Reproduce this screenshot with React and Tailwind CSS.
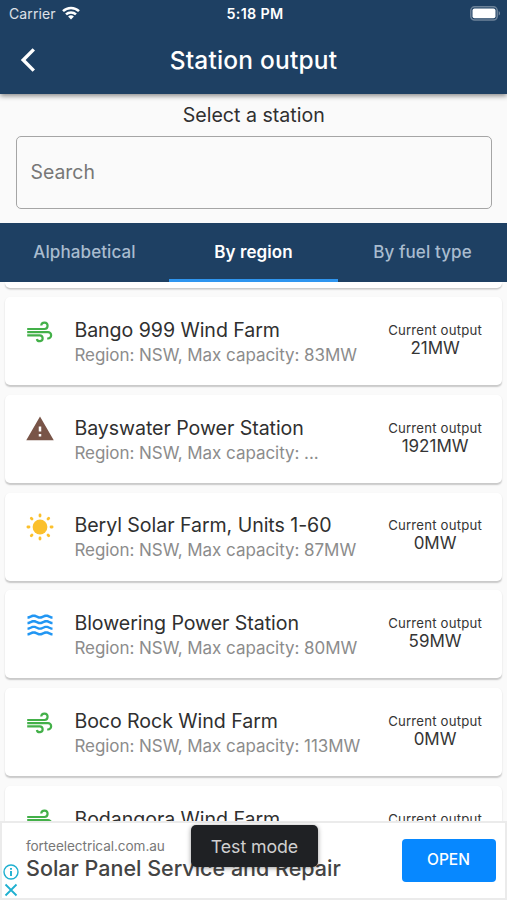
import clsx from 'clsx';
import { MdWarning, MdWaves } from 'react-icons/md';

const stations = [
  { name: 'Bango 999 Wind Farm', detail: 'Region: NSW, Max capacity: 83MW', output: '21MW', fuel: 'wind' },
  { name: 'Bayswater Power Station', detail: 'Region: NSW, Max capacity: ...', output: '1921MW', fuel: 'coal' },
  { name: 'Beryl Solar Farm, Units 1-60', detail: 'Region: NSW, Max capacity: 87MW', output: '0MW', fuel: 'solar' },
  { name: 'Blowering Power Station', detail: 'Region: NSW, Max capacity: 80MW', output: '59MW', fuel: 'hydro' },
  { name: 'Boco Rock Wind Farm', detail: 'Region: NSW, Max capacity: 113MW', output: '0MW', fuel: 'wind' },
  { name: 'Bodangora Wind Farm', detail: 'Region: NSW, Max capacity: 113MW', output: '0MW', fuel: 'wind' },
];

const tabs = ['Alphabetical', 'By region', 'By fuel type'];

const WindIcon = () => (
  <svg viewBox="0 0 28 24" className="h-6 w-7 text-[#43b049]" fill="none" stroke="currentColor" strokeWidth="2.2">
    <path d="M1.2 9h17.3a3.2 3.2 0 1 0-3.3-3.5" />
    <path d="M1.2 12.2h20.8a3.1 3.1 0 0 1 0 6.3h-.8" />
    <path d="M1.2 15.4h12.6a2.9 2.9 0 1 1-2.9 3.5" />
  </svg>
);

const SunIcon = () => (
  <svg viewBox="0 0 28 28" className="size-7 text-[#fbc02d]" fill="currentColor">
    <circle cx="14" cy="14" r="7.4" />
    <g stroke="currentColor" strokeWidth="2.8" strokeLinecap="round">
      <path d="M14 1.9v1.1M14 25v1.1M1.9 14h1.1M25 14h1.1M5.3 5.3l.7.7M22 22l.7.7M5.3 22.7l.7-.7M22 6l.7-.7" />
    </g>
  </svg>
);

const FuelIcon = ({ fuel }) => {
  if (fuel === 'wind') return <WindIcon />;
  if (fuel === 'coal') return <MdWarning className="size-[30px] shrink-0 text-[#795548]" />;
  if (fuel === 'solar') return <SunIcon />;
  return <MdWaves className="size-[30px] shrink-0 text-[#2196f3]" />;
};

const StatusBar = () => (
  <div className="grid h-[27px] grid-cols-3 items-center pr-[6px] pl-[9px] text-[14px]">
    <div className="flex items-center gap-[6px]">
      <span className="tracking-[0.1px] text-white/85">Carrier</span>
      <svg viewBox="0 0 18 14" className="mb-[2px] h-[14px] w-[18px]" fill="none" stroke="white" strokeWidth="2.5">
        <path d="M1 5.2a11.5 11.5 0 0 1 16 0" />
        <path d="M4 8.4a7.2 7.2 0 0 1 10 0" />
        <path d="M9 13.6l-2.9-3a4.2 4.2 0 0 1 5.8 0z" fill="white" stroke="none" />
      </svg>
    </div>
    <span className="text-center text-[14.3px] font-semibold tracking-[0.35px]">5:18 PM</span>
    <svg viewBox="0 0 31 15" className="mb-px h-[15px] w-[31px] justify-self-end">
      <rect x=".8" y=".8" width="26.4" height="13.2" rx="3.8" fill="none" stroke="white" strokeOpacity=".35" strokeWidth="1.5" />
      <rect x="2.5" y="2.6" width="23" height="9.6" rx="2" fill="white" />
      <path d="M28.7 5v4.6c1.8-.8 1.8-3.8 0-4.6z" fill="white" fillOpacity=".4" />
    </svg>
  </div>
);

const StationCard = ({ station }) => (
  <div className="flex h-[88px] shrink-0 rounded-[5px] bg-white pl-5 shadow-[0_1.5px_1.5px_rgba(0,0,0,0.2)]">
    <div className="mt-5 flex h-[29px] w-[29px] items-center justify-center">
      <FuelIcon fuel={station.fuel} />
    </div>
    <div className="mt-[20.8px] ml-5 flex-1 whitespace-nowrap">
      <div className="text-[19.6px] leading-6 tracking-[-0.06px] text-[#303030]">{station.name}</div>
      <div className="mt-[3px] text-[17px] leading-5 tracking-[-0.05px] text-[#8c8c8c]">{station.detail}</div>
    </div>
    <div className="mt-[24.8px] mr-5 text-center text-[#353535]">
      <div className="text-[13.2px] leading-4 tracking-[0.2px]">Current output</div>
      <div className="text-[17px] leading-[21px]">{station.output}</div>
    </div>
  </div>
);

const AdBanner = () => (
  <div className="relative flex h-[79px] items-center border-2 border-[#ebebeb] bg-white">
    <div className="flex w-[18px] flex-col items-center gap-[3px] self-end pb-px text-[#1fb0d0]">
      <svg viewBox="0 0 16 16" className="size-4" fill="none" stroke="currentColor" strokeWidth="1.4">
        <circle cx="8" cy="8" r="7" />
        <path d="M8 7v5M8 4v1.7" strokeWidth="1.9" />
      </svg>
      <svg viewBox="0 0 14 14" className="size-[14px]" fill="none" stroke="currentColor" strokeWidth="1.8">
        <path d="M1.5 1.5l11 11M12.5 1.5l-11 11" />
      </svg>
    </div>
    <div className="mb-[4px] ml-[6px] flex-1 whitespace-nowrap">
      <div className="text-[13.6px] leading-4 tracking-[-0.08px] text-[#777]">forteelectrical.com.au</div>
      <div className="mt-[2px] text-[21.5px] leading-6 font-medium text-[#444]">Solar Panel Service and Repair</div>
    </div>
    <button className="mr-[9.5px] mb-px h-[43px] w-[94px] rounded-[4px] bg-[#0788ff] text-[15.5px] font-medium text-white">OPEN</button>
    <div className="absolute top-[2px] left-[189px] flex h-[42px] w-[127px] items-center justify-center rounded-[5px] bg-[#1f2124] pt-[2px] text-[17.8px] tracking-[-0.1px] text-[#d0d0d0] shadow-[0_1px_5px_rgba(0,0,0,0.4)]">
      Test mode
    </div>
  </div>
);

const App = () => {
  return (
    <div className="flex h-[900px] w-[507px] flex-col overflow-hidden bg-[#fafafa] font-['Inter',sans-serif]">
      <header className="relative z-10 h-[94px] shrink-0 bg-[#1e4063] text-white shadow-[0_2px_5px_rgba(0,0,0,0.45)]">
        <StatusBar />
        <div className="grid h-[66px] grid-cols-[60px_1fr_60px] items-center">
          <svg viewBox="0 0 16 24" className="ml-5 h-6 w-4" fill="none" stroke="currentColor" strokeWidth="3.4">
            <path d="M13.8 1.4L3.2 12l10.6 10.6" />
          </svg>
          <h1 className="text-center text-[24.5px] font-medium tracking-[0.2px]">Station output</h1>
        </div>
      </header>

      <section className="h-[129px] shrink-0 pt-[9px] pr-[15px] pl-[15.5px]">
        <div className="text-center text-[19.6px] leading-6 text-[#303030]">Select a station</div>
        <div className="mt-[9px] flex h-[73px] items-center rounded-[5px] border border-[#a5a5a5] px-[14px] text-[19.4px] text-[#777]">
          Search
        </div>
      </section>

      <nav className="grid h-[59px] shrink-0 grid-cols-3 bg-[#1e4063] text-[17px] tracking-[0.1px]">
        {tabs.map((tab) => (
          <div
            key={tab}
            className={clsx(
              'flex items-center justify-center border-b-[3px] pt-[3px] font-medium',
              tab === 'By region' ? 'border-[#2f96f0] font-semibold text-white' : 'border-transparent text-[#a9bccf]',
            )}
          >
            {tab}
          </div>
        ))}
      </nav>

      <main className="flex min-h-0 flex-1 flex-col gap-[9.7px] overflow-hidden pr-[5px] pl-[5.4px]">
        <div className="h-[5.6px] shrink-0 rounded-b-[5px] bg-white shadow-[0_1.5px_1.5px_rgba(0,0,0,0.2)]" />
        {stations.map((station) => (
          <StationCard key={station.name} station={station} />
        ))}
      </main>

      <AdBanner />
    </div>
  );
};

export default App;
